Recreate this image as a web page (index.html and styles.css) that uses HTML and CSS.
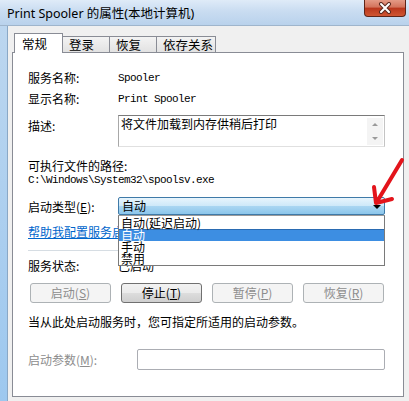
FILE: index.html
```html
<!DOCTYPE html>
<html>

<head>
  <meta charset="utf-8" />
  <title>Print Spooler 的属性</title>
  <link rel="stylesheet" href="styles.css">
</head>

<body>
  <div class="window">
    <div class="titlebar">
      <span class="title">Print Spooler 的属性(本地计算机)</span>
      <div class="close">
        <svg width="14" height="12" viewBox="0 0 14 12">
          <path d="M3 2 L11 10 M11 2 L3 10" stroke="#5a2a20" stroke-width="4" stroke-linecap="round" />
          <path d="M3 2 L11 10 M11 2 L3 10" stroke="#fff" stroke-width="2" stroke-linecap="round" />
        </svg>
      </div>
    </div>
    <div class="frame">
      <div class="frame-edge"></div>
      <div class="client">
        <div class="tabs">
          <div class="tab active">常规</div>
          <div class="tab">登录</div>
          <div class="tab">恢复</div>
          <div class="tab wide">依存关系</div>
        </div>
        <div class="panel">
          <div class="row">
            <span class="label">服务名称:</span>
            <span class="mono">Spooler</span>
          </div>
          <div class="row">
            <span class="label">显示名称:</span>
            <span class="mono">Print Spooler</span>
          </div>
          <div class="desc-row">
            <span class="label">描述:</span>
            <div class="desc">
              将文件加载到内存供稍后打印
              <div class="scroll">
                <span class="up"></span>
                <span class="down"></span>
              </div>
            </div>
          </div>
          <div class="path-label">可执行文件的路径:</div>
          <div class="path mono">C:\Windows\System32\spoolsv.exe</div>
          <div class="combo-row">
            <span class="label">启动类型(<u>E</u>):</span>
            <div class="combo">
              自动
              <div class="list">
                <div class="item">自动(延迟启动)</div>
                <div class="item sel">自动</div>
                <div class="item">手动</div>
                <div class="item">禁用</div>
              </div>
            </div>
          </div>
          <div class="link">帮助我配置服务启动选项。</div>
          <div class="sep"></div>
          <div class="status-row">
            <span class="label">服务状态:</span>
            <span>已启动</span>
          </div>
          <div class="buttons">
            <div class="btn off">启动(<u>S</u>)</div>
            <div class="btn">停止(<u>T</u>)</div>
            <div class="btn off">暂停(<u>P</u>)</div>
            <div class="btn off">恢复(<u>R</u>)</div>
          </div>
          <div class="note">当从此处启动服务时，您可指定所适用的启动参数。</div>
          <div class="param-row">
            <span class="label">启动参数(<u>M</u>):</span>
            <div class="param-input"></div>
          </div>
        </div>
      </div>
    </div>
    <!-- 红色箭头标注 -->
    <svg class="arrow" width="54" height="60" viewBox="355 150 54 60">
      <path d="M402 160 L378 200" stroke="#e3141b" stroke-width="4" stroke-linecap="round" fill="none" />
      <path d="M374 187 L376 203 L392 199" stroke="#e3141b" stroke-width="4" stroke-linecap="round"
        stroke-linejoin="round" fill="none" />
    </svg>
  </div>
</body>

</html>
```

FILE: styles.css
```css
html,
body {
  margin: 0;
  padding: 0;
}

body {
  font-family: "Noto Sans CJK SC", sans-serif;
  font-size: 12px;
  color: #000;
}

.window {
  position: relative;
  width: 409px;
  height: 401px;
  overflow: hidden;
  background: #c4d9ee;
}

.titlebar {
  height: 26px;
  box-sizing: border-box;
  display: flex;
  align-items: center;
  padding-left: 7px;
  background: linear-gradient(to bottom, #dfebf8 0%, #c9dcf1 45%, #b9d2ec 100%);
  border-bottom: 1px solid #9fb5cc;
}

.title {
  font-family: "Noto Sans", "Noto Sans CJK SC", sans-serif;
  font-size: 12.5px;
  margin-top: -1px;
}

.close {
  position: absolute;
  left: 364px;
  top: 0;
  width: 42px;
  height: 17px;
  box-sizing: border-box;
  border: 1px solid #5e2418;
  border-top: none;
  border-radius: 0 0 4px 4px;
  background: linear-gradient(to bottom, #e49a86 0%, #d3735b 45%, #b9361c 50%, #cf5532 100%);
  display: flex;
  align-items: center;
  justify-content: center;
}

.frame {
  display: flex;
  height: 375px;
}

.frame-edge {
  width: 7px;
  background: linear-gradient(to bottom, #bcd6ef, #9dc8ef);
  border-right: 1px solid #8aa8c6;
}

.client {
  flex: 1;
  box-sizing: border-box;
  background: #f0f0f0;
  padding: 7px 5px 4px 4px;
}

.tabs {
  display: flex;
  align-items: flex-end;
  height: 19px;
  padding-left: 2px;
  position: relative;
  z-index: 1;
}

.tab {
  width: 47px;
  height: 16px;
  box-sizing: border-box;
  border: 1px solid #898c95;
  border-left: none;
  border-bottom: none;
  background: linear-gradient(to bottom, #f3f3f3, #e2e2e2);
  padding-left: 6px;
  line-height: 15px;
  font-size: 12.5px;
}

.tab.active {
  width: 49px;
  height: 20px;
  margin-bottom: -1px;
  border-left: 1px solid #898c95;
  background: #fff;
  padding-left: 7px;
  line-height: 19px;
}

.tab.wide {
  width: 59px;
}

.panel {
  height: 345px;
  box-sizing: border-box;
  border: 1px solid #898c95;
  background: #fff;
  padding: 14px 18px 0 15px;
}

.row {
  display: flex;
  align-items: center;
  height: 21px;
}

.label {
  width: 90px;
  flex: none;
}

.mono {
  font-family: "Liberation Mono", monospace;
  font-size: 11px;
  letter-spacing: -0.6px;
}

.desc-row {
  display: flex;
  align-items: flex-start;
  height: 32px;
  margin-top: 6px;
}

.desc-row .label {
  padding-top: 4px;
  line-height: 14px;
}

.desc {
  flex: 1;
  height: 32px;
  box-sizing: border-box;
  position: relative;
  border: 1px solid;
  border-color: #7a7a7a #c4c4c4 #e0e0e0 #a8a8a8;
  padding: 1px 0 0 2px;
  line-height: 14px;
}

.scroll {
  position: absolute;
  right: 1px;
  top: 2px;
  bottom: 1px;
  width: 16px;
  background: #f4f4f4;
}

.scroll span {
  position: absolute;
  left: 5px;
  width: 0;
  height: 0;
  border-left: 3px solid transparent;
  border-right: 3px solid transparent;
}

.scroll .up {
  top: 5px;
  border-bottom: 3px solid #9a9a9a;
}

.scroll .down {
  bottom: 5px;
  border-top: 3px solid #9a9a9a;
}

.path-label {
  margin-top: 11px;
  line-height: 15px;
}

.path {
  line-height: 14px;
}

.combo-row {
  display: flex;
  align-items: center;
  height: 18px;
  margin-top: 10px;
}

.combo {
  flex: 1;
  height: 18px;
  box-sizing: border-box;
  position: relative;
  border: 1px solid #3f7aa8;
  border-radius: 2px;
  background: linear-gradient(to bottom, #e8f5fd 0%, #cde8f9 50%, #aad6f2 51%, #8cc6eb 100%);
  padding-left: 3px;
  line-height: 16px;
  z-index: 2;
}

.combo::after {
  content: "";
  position: absolute;
  right: 3px;
  top: 7px;
  border-left: 4px solid transparent;
  border-right: 4px solid transparent;
  border-top: 4px solid #000;
}

.list {
  position: absolute;
  top: 17px;
  left: -1px;
  right: -1px;
  border: 1px solid #7a7a7a;
  border-top-color: #9a9a9a;
  background: #fff;
  padding-top: 1px;
}

.item {
  height: 12px;
  line-height: 12px;
  padding-left: 2px;
}

.item.sel {
  background: #3d8ee2;
  color: #fff;
  box-shadow: inset 0 1px 0 #2a6bb2;
}

.link {
  margin-top: 10px;
  line-height: 14px;
  color: #0066cc;
  text-decoration: underline;
}

.sep {
  margin-top: 11px;
  height: 1px;
  background: #d6dde3;
}

.status-row {
  display: flex;
  margin-top: 8px;
  line-height: 14px;
}

.buttons {
  display: flex;
  gap: 10px;
  margin-top: 10px;
  padding-left: 2px;
}

.btn {
  width: 81px;
  height: 20px;
  box-sizing: border-box;
  border: 1px solid #707070;
  border-radius: 3px;
  background: linear-gradient(to bottom, #f2f2f2 0%, #ebebeb 50%, #dddddd 51%, #cfcfcf 100%);
  text-align: center;
  line-height: 18px;
}

.btn.off {
  border-color: #adb2b5;
  background: #f4f4f4;
  color: #8d8d8d;
}

.note {
  margin-top: 12px;
  line-height: 14px;
}

.param-row {
  display: flex;
  align-items: center;
  height: 21px;
  margin-top: 20px;
}

.param-row .label {
  width: 109px;
  color: #8d8d8d;
}

.param-input {
  flex: 1;
  height: 21px;
  box-sizing: border-box;
  border: 1px solid #abadb3;
  border-radius: 2px;
}

.arrow {
  position: absolute;
  left: 355px;
  top: 150px;
  z-index: 5;
}
```
